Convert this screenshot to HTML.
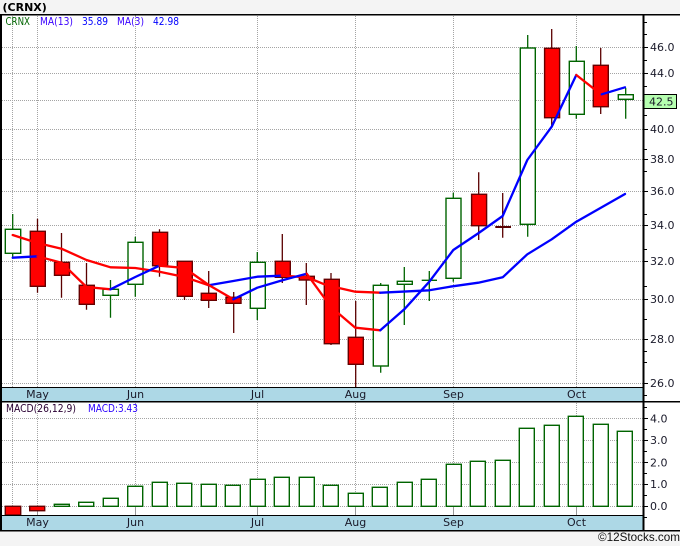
<!DOCTYPE html>
<html><head><meta charset="utf-8"><style>
html,body{margin:0;padding:0;background:#f4f4f4}
svg{display:block}
text{font-family:"DejaVu Sans",sans-serif;font-size:11px;fill:#1a1a2a}
</style></head><body>
<svg width="680" height="546" viewBox="0 0 680 546" xmlns="http://www.w3.org/2000/svg">
<rect x="0" y="0" width="680" height="546" fill="#f4f4f4"/>
<rect x="0" y="14" width="680" height="516" fill="#fff"/>
<rect x="0" y="387" width="643" height="14" fill="#add8e6"/>
<rect x="0" y="515" width="643" height="15" fill="#add8e6"/>
<g stroke="#a4a4a4" stroke-width="1" stroke-dasharray="1 1" fill="none" shape-rendering="crispEdges">
<path d="M12.5 14V387M37.5 14V387M135.5 14V387M257.5 14V387M355.5 14V387M453.5 14V387M576.5 14V387"/>
<path d="M12.5 401V509M37.5 401V509M135.5 401V509M257.5 401V509M355.5 401V509M453.5 401V509M576.5 401V509"/>
<path d="M2 47.5H643M2 73.5H643M2 100.5H643M2 129.5H643M2 159.5H643M2 191.5H643M2 225.5H643M2 261.5H643M2 299.5H643M2 339.5H643M2 383.5H643"/>
<path d="M2 418.5H643M2 440.5H643M2 462.5H643M2 484.5H643M2 506.5H643"/>
</g>
<path d="M37.5 510V515M135.5 507V515M257.5 507V515M355.5 507V515M453.5 507V515M576.5 507V515M135.5 14V17" stroke="#999" stroke-width="1" fill="none" shape-rendering="crispEdges"/>
<!-- wicks -->
<path fill="none" stroke="#006400" stroke-width="1.3" d="M12.7 214V258M110.5 280V317.7M135.3 236.7V296.7M257.3 252V320M380.7 283V372.7M404.3 267V325M429.3 271V301M453.3 192.7V281.7M527.7 35V236.7M576.3 46V118.7M625.7 88V118.7"/>
<path fill="none" stroke="#5a0000" stroke-width="1.3" d="M37.5 218.7V292.7M61.5 233V297.7M86.5 263V309.7M159.5 229.3V276.7M184.5 261V300M208.7 271V308M233.7 292V333M282.3 234V283M306.3 263V305M331 273V345M355.7 301V387M478.7 172.3V240M502.7 193V237.7M551.7 29V126.7M600.7 48V114"/>
<!-- hollow bodies -->
<g fill="#fff" stroke="#006400" stroke-width="1.4">
<rect x="5.3" y="229.3" width="15.4" height="24"/>
<rect x="103" y="289.3" width="15.4" height="6"/>
<rect x="128" y="242.3" width="15" height="42"/>
<rect x="250.3" y="262.3" width="15" height="46"/>
<rect x="373.3" y="285.3" width="15" height="80.7"/>
<rect x="397.3" y="281.3" width="15" height="3"/>
<rect x="446" y="198.3" width="15" height="80"/>
<rect x="520.3" y="48" width="15" height="176.3"/>
<rect x="569.3" y="61.3" width="15" height="53"/>
<rect x="618.3" y="94.7" width="15" height="4.6"/>
</g>
<path d="M421.7 280.3H437" stroke="#006400" stroke-width="1.4" fill="none"/>
<!-- filled bodies -->
<g fill="#f00" stroke="#660000" stroke-width="1.4">
<rect x="30.3" y="231.3" width="15" height="55"/>
<rect x="54.5" y="262.3" width="15" height="13"/>
<rect x="79.3" y="285.3" width="15" height="19"/>
<rect x="152.6" y="232.3" width="15" height="33.4"/>
<rect x="177.3" y="261.3" width="15" height="35"/>
<rect x="201.3" y="293.3" width="15" height="7"/>
<rect x="226" y="297.3" width="15" height="6"/>
<rect x="275.3" y="261.3" width="15" height="16"/>
<rect x="299.3" y="276.3" width="15" height="3.7"/>
<rect x="324.3" y="279.3" width="15" height="64.4"/>
<rect x="348.3" y="337.3" width="15" height="27"/>
<rect x="471.6" y="194.3" width="15" height="31.4"/>
<rect x="544.6" y="48.3" width="15" height="69.4"/>
<rect x="593.3" y="65.3" width="15" height="41.4"/>
</g>
<path d="M495.3 227H511" stroke="#5a0000" stroke-width="2" fill="none"/>
<!-- moving averages -->
<g fill="none" stroke-width="2.3" stroke-linejoin="round" stroke-linecap="round">
<path stroke="#f00" d="M12.7 235L37.5 243L61.5 248.7L86.5 260L110.5 267.3L135.3 268L159.5 271.7L184.5 277L208.7 285.3"/>
<path stroke="#00f" d="M208.7 285.3L233.3 281L257.3 276.7L281.7 275.7"/>
<path stroke="#f00" d="M281.7 275.7L307.3 277.3L324.3 284.3L340 288.3L355.3 291.7L380.3 292.7"/>
<path stroke="#00f" d="M380.3 292.7L429.3 290.3L450 286.7L478.3 282.7L502.7 277.3L527.3 254.3L551.7 239.3L576.3 221.7L625 194"/>
<path stroke="#00f" d="M12.7 257.7L37.5 256.3"/>
<path stroke="#f00" d="M37.5 256.3L61.5 262.7L86.5 287L110.5 289.3"/>
<path stroke="#00f" d="M110.5 289.3L135.3 277L159.5 265.7"/>
<path stroke="#f00" d="M159.5 265.7L184.5 268L208.7 285L233.3 299.3"/>
<path stroke="#00f" d="M233.3 299.3L257.3 287.7L283.3 280L306.7 273.7"/>
<path stroke="#f00" d="M306.7 273.7L331 307L355.3 327.7L380.3 330.3"/>
<path stroke="#00f" d="M380.3 330.3L404.3 309.3L429.3 281.7L453.3 250L478.7 233L502.7 216L527.3 160L551.7 126.7L576.3 75"/>
<path stroke="#f00" d="M576.3 75L601 94.3"/>
<path stroke="#00f" d="M601.7 94.3L625 87.3"/>
</g>
<!-- macd bars -->
<g fill="#fff" stroke="#006400" stroke-width="1.4">
<rect x="54.3" y="504.3" width="15" height="2"/>
<rect x="78.7" y="502.3" width="15" height="4"/>
<rect x="103.3" y="498.3" width="15" height="8"/>
<rect x="127.7" y="486.3" width="15" height="20"/>
<rect x="152.3" y="482.3" width="15" height="24"/>
<rect x="176.7" y="483.3" width="15" height="23"/>
<rect x="201.3" y="484.3" width="15" height="22"/>
<rect x="225.3" y="485.3" width="15" height="21"/>
<rect x="250.3" y="479.3" width="15" height="27"/>
<rect x="274.3" y="477.3" width="15" height="29"/>
<rect x="299.3" y="477.3" width="15" height="29"/>
<rect x="323.3" y="485.3" width="15" height="21"/>
<rect x="348.3" y="493.3" width="15" height="13"/>
<rect x="372.3" y="487.3" width="15" height="19"/>
<rect x="397.3" y="482.3" width="15" height="24"/>
<rect x="421.3" y="479.3" width="15" height="27"/>
<rect x="446.3" y="464.3" width="15" height="42"/>
<rect x="470.3" y="461.3" width="15" height="45"/>
<rect x="495.3" y="460.3" width="15" height="46"/>
<rect x="519.3" y="428.3" width="15" height="78"/>
<rect x="544.3" y="425.3" width="15" height="81"/>
<rect x="568.3" y="416.3" width="15" height="90"/>
<rect x="593.3" y="424.3" width="15" height="82"/>
<rect x="617.3" y="431.3" width="15" height="75"/>
</g>
<g fill="#f00" stroke="#660000" stroke-width="1.4">
<rect x="5.3" y="506.3" width="15.4" height="8.7"/>
<rect x="29.7" y="506.3" width="15" height="4.4"/>
</g>
<!-- frame -->
<g stroke="#000" fill="none" shape-rendering="crispEdges">
<path stroke-width="1.5" d="M0 14.5H680M0 401.5H680M0 530.5H680"/>
<path stroke-width="1" d="M0 387.5H643M0 515.5H643"/>
<path stroke-width="2" d="M1 14V530M643.5 14V530"/>
<path stroke-width="1" d="M644 22.5H647M644 34.5H647M644 47.5H648M644 60.5H647M644 73.5H648M644 86.5H647M644 115.5H647M644 129.5H648M644 149.5H647M644 159.5H648M644 171.5H647M644 191.5H648M644 214.5H647M644 225.5H648M644 249.5H647M644 261.5H648M644 286.5H647M644 299.5H648M644 319.5H647M644 339.5H648M644 351.5H647M644 362.5H647M644 383.5H648M644 395.5H647M644 407.5H647M644 418.5H648M644 429.5H647M644 440.5H648M644 451.5H647M644 462.5H648M644 473.5H647M644 484.5H648M644 495.5H647M644 506.5H648M644 517.5H647"/>
</g>
<!-- price tag -->
<rect x="644" y="94.5" width="32.5" height="14" fill="#b6ffb0" stroke="#000" stroke-width="1"/>
<text x="649" y="105.5">42.5</text>
<!-- axis labels -->
<g>
<text x="650" y="51">46.0</text>
<text x="650" y="77">44.0</text>
<text x="650" y="133">40.0</text>
<text x="650" y="163">38.0</text>
<text x="650" y="195">36.0</text>
<text x="650" y="229">34.0</text>
<text x="650" y="265">32.0</text>
<text x="650" y="303">30.0</text>
<text x="650" y="343">28.0</text>
<text x="650" y="387">26.0</text>
<text x="650" y="422.500">4.0</text>
<text x="650" y="444">3.0</text>
<text x="650" y="466.500">2.0</text>
<text x="650" y="488">1.0</text>
<text x="650" y="510">0.0</text>
</g>
<!-- month labels -->
<g text-anchor="middle">
<text x="37.500" y="398">May</text>
<text x="135.500" y="398">Jun</text>
<text x="257.500" y="398">Jul</text>
<text x="355.500" y="398">Aug</text>
<text x="453.500" y="398">Sep</text>
<text x="576.500" y="398">Oct</text>
<text x="37.500" y="526">May</text>
<text x="135.500" y="526">Jun</text>
<text x="257.500" y="526">Jul</text>
<text x="355.500" y="526">Aug</text>
<text x="453.500" y="526">Sep</text>
<text x="576.500" y="526">Oct</text>
</g>
<!-- legends -->
<text x="5.500" y="25" textLength="24.500" lengthAdjust="spacingAndGlyphs" style="font-size:10.500px;fill:#006400">CRNX</text>
<text x="40" y="25" textLength="33" lengthAdjust="spacingAndGlyphs" style="font-size:10.500px;fill:#3a00ff">MA(13)</text>
<text x="82" y="25" textLength="26" lengthAdjust="spacingAndGlyphs" style="font-size:10.500px;fill:#0000ff">35.89</text>
<text x="117" y="25" textLength="27" lengthAdjust="spacingAndGlyphs" style="font-size:10.500px;fill:#3a00ff">MA(3)</text>
<text x="153" y="25" textLength="26" lengthAdjust="spacingAndGlyphs" style="font-size:10.500px;fill:#0000ff">42.98</text>
<text x="6" y="412" textLength="70" lengthAdjust="spacingAndGlyphs" style="font-size:10.500px;fill:#2a0033">MACD(26,12,9)</text>
<text x="88" y="412" textLength="50" lengthAdjust="spacingAndGlyphs" style="font-size:10.500px;fill:#2a00ff">MACD:3.43</text>
<!-- title and credit -->
<text x="2.500" y="11" style="font-size:11px;font-weight:bold;fill:#000">(CRNX)</text>
<text x="598" y="541" textLength="82" lengthAdjust="spacingAndGlyphs" style='font-family:"Liberation Sans",sans-serif;font-size:12px;fill:#111'>©12Stocks.com</text>
</svg>
</body></html>
